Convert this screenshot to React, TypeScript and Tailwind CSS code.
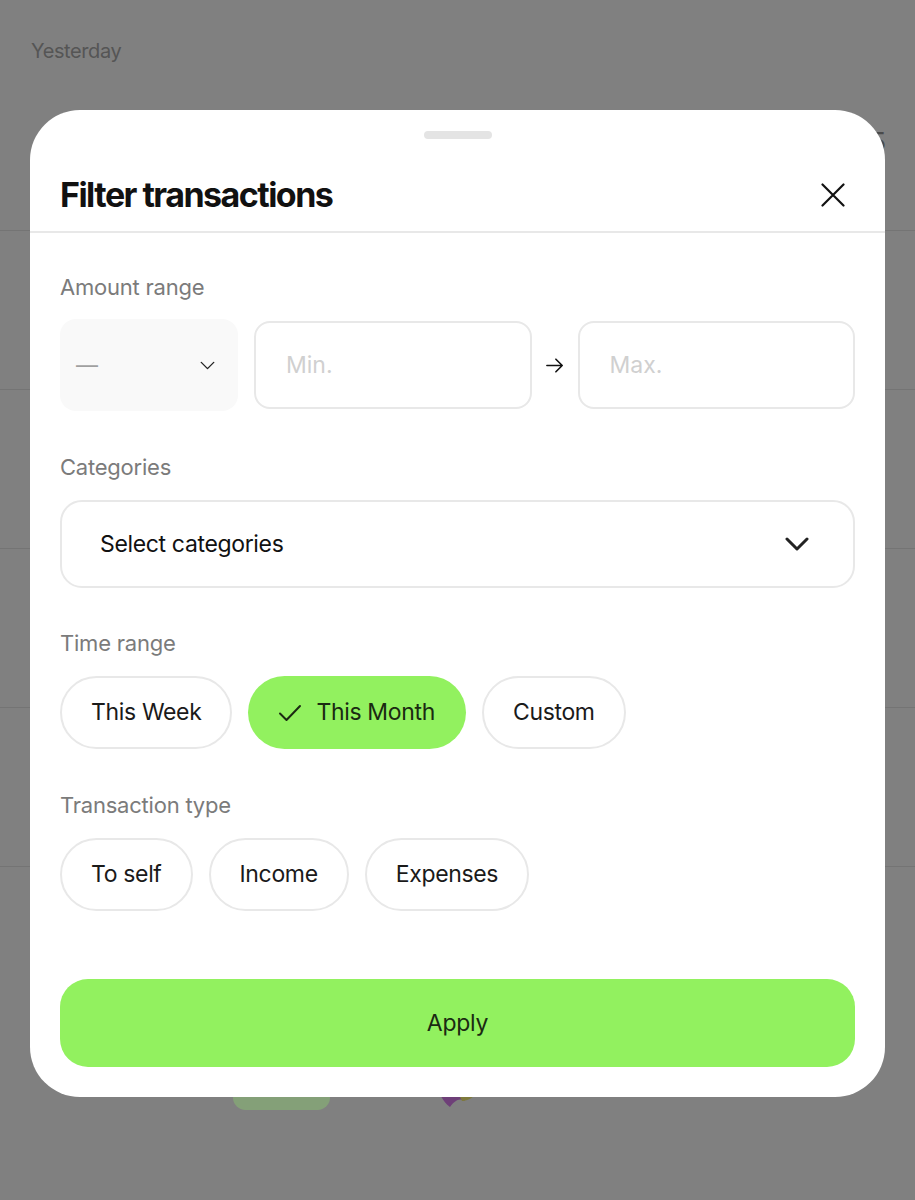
import React from "react"

const timeRanges = [
  { label: "This Week", active: false },
  { label: "This Month", active: true },
  { label: "Custom", active: false },
]

const txTypes = ["To self", "Income", "Expenses"]

function Chevron({ className, width = 2 }: { className?: string; width?: number }) {
  return (
    <svg viewBox="0 0 24 14" fill="none" className={className}>
      <path d="M2 2l10 10L22 2" stroke="currentColor" strokeWidth={width} strokeLinecap="round" strokeLinejoin="round" />
    </svg>
  )
}

function Chip({ label, active }: { label: string; active?: boolean }) {
  if (active) {
    return (
      <button className="h-[73px] flex items-center gap-[14px] rounded-full bg-[#92f15f] pl-[30px] pr-[31px] text-[23px] tracking-[-0.015em] text-[#1b2a12]">
        <svg viewBox="0 0 24 24" fill="none" className="w-[24px] h-[24px]">
          <path d="M2 12.5l6.5 6.5L22 5" stroke="currentColor" strokeWidth="2" strokeLinecap="round" strokeLinejoin="round" />
        </svg>
        {label}
      </button>
    )
  }
  return (
    <button className="h-[73px] flex items-center rounded-full border-2 border-[#e8e8e8] px-[29px] text-[23px] tracking-[-0.015em] text-[#1a1a1a]">
      {label}
    </button>
  )
}

function Label({ children }: { children: React.ReactNode }) {
  return <div className="text-[22px] leading-[28px] text-[#7b7b7b] tracking-[-0.01em]">{children}</div>
}

function Background() {
  return (
    <div className="flex flex-col">
      <div className="h-[72px] pt-[38px] px-[31px] text-[20px] leading-[26px] text-[#555555] tracking-[-0.02em]">
        Yesterday
      </div>
      <div className="h-[159px] border-b border-[#747474] flex justify-end pt-[50px] pr-[29px]">
        <span className="text-[26px] text-[#4a4a4a]">$125</span>
      </div>
      <div className="h-[159px] border-b border-[#747474]" />
      <div className="h-[159px] border-b border-[#747474]" />
      <div className="h-[159px] border-b border-[#747474]" />
      <div className="h-[159px] border-b border-[#747474]" />
      <div className="flex items-start pt-[218px] pl-[233px] gap-[100px]">
        <div className="w-[97px] h-[25px] rounded-[14px] bg-[#84a078]" />
        <svg viewBox="0 0 48 26" className="w-[48px] h-[26px] -mt-[2px]">
          <path d="M4 2 C10 10 12 18 20 24 C24 18 30 14 34 18 C40 12 44 8 46 2 Z" fill="#6e3f78" />
          <path d="M30 14 C36 12 42 10 46 4 L47 10 C42 16 36 18 32 18 Z" fill="#7e7a3c" />
        </svg>
      </div>
    </div>
  )
}

export default function App() {
  return (
    <div className="relative w-[915px] h-[1200px] overflow-hidden bg-[#808080] font-['Inter',sans-serif]">
      <Background />

      <div className="absolute left-[30px] top-[110px] w-[855px] h-[987px] rounded-[50px] bg-white flex flex-col">
        <div className="flex justify-center pt-[21px]">
          <div className="w-[68px] h-[8px] rounded-full bg-[#e4e4e4]" />
        </div>

        <div className="flex items-center justify-between px-[30px] pt-[36px] pb-[16px] border-b-2 border-[#e8e8e8]">
          <h2 className="text-[34px] leading-[40px] font-bold tracking-[-0.045em] text-[#111111]">Filter transactions</h2>
          <button className="w-[24px] h-[24px] mr-[10px] text-[#111111]">
            <svg viewBox="0 0 24 24" fill="none" className="w-[24px] h-[24px]">
              <path d="M1.5 1.5l21 21M22.5 1.5l-21 21" stroke="currentColor" strokeWidth="2.2" strokeLinecap="round" />
            </svg>
          </button>
        </div>

        <div className="flex flex-col px-[30px] pt-[40px]">
          <Label>Amount range</Label>
          <div className="mt-[18px] h-[92px] flex items-center">
            <div className="w-[178px] h-[92px] rounded-[16px] bg-[#f9f9f9] flex items-center justify-between pl-[16px] pr-[23px]">
              <span className="text-[22px] text-[#a0a0a0]">—</span>
              <Chevron className="w-[15px] h-[9px] text-[#222222]" width={2.2} />
            </div>
            <div className="ml-[16px] flex-1 h-[88px] rounded-[16px] border-2 border-[#e8e8e8] flex items-center px-[30px] text-[23px] text-[#d0d0d0]">
              Min.
            </div>
            <div className="w-[46px] flex justify-center">
              <svg viewBox="0 0 20 16" fill="none" className="w-[18px] h-[15px] text-[#111111]">
                <path d="M1 8h17M11 1l7 7-7 7" stroke="currentColor" strokeWidth="1.8" strokeLinecap="round" strokeLinejoin="round" />
              </svg>
            </div>
            <div className="flex-1 h-[88px] rounded-[16px] border-2 border-[#e8e8e8] flex items-center px-[30px] text-[23px] text-[#d0d0d0]">
              Max.
            </div>
          </div>

          <div className="mt-[42px]">
            <Label>Categories</Label>
          </div>
          <div className="mt-[19px] h-[88px] rounded-[22px] border-2 border-[#e8e8e8] flex items-center justify-between pl-[38px] pr-[44px]">
            <span className="text-[23px] tracking-[-0.015em] text-[#111111]">Select categories</span>
            <Chevron className="w-[24px] h-[14px] text-[#222222]" width={3} />
          </div>

          <div className="mt-[41px]">
            <Label>Time range</Label>
          </div>
          <div className="mt-[19px] flex gap-[16px]">
            {timeRanges.map((t) => (
              <Chip key={t.label} label={t.label} active={t.active} />
            ))}
          </div>

          <div className="mt-[42px]">
            <Label>Transaction type</Label>
          </div>
          <div className="mt-[19px] flex gap-[16px]">
            {txTypes.map((t) => (
              <Chip key={t} label={t} />
            ))}
          </div>

          <button className="mt-[68px] h-[88px] rounded-[28px] bg-[#92f15f] text-[23px] tracking-[-0.01em] text-[#1b2a12]">
            Apply
          </button>
        </div>
      </div>
    </div>
  )
}
